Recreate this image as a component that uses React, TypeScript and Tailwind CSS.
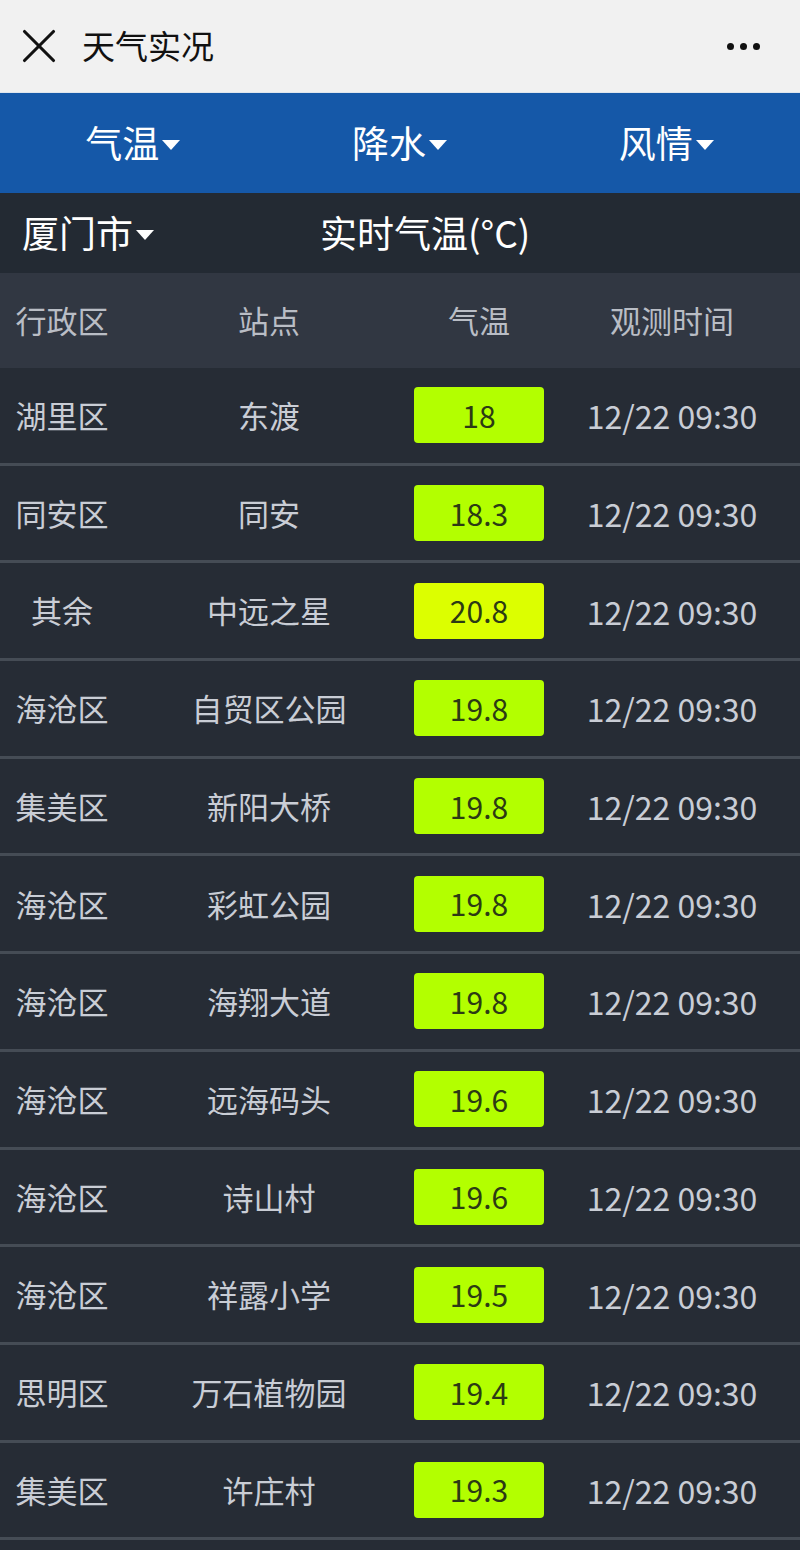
import { X } from "lucide-react";

type Row = {
  district: string;
  station: string;
  temp: string;
  hot?: boolean;
};

const rows: Row[] = [
  { district: "湖里区", station: "东渡", temp: "18" },
  { district: "同安区", station: "同安", temp: "18.3" },
  { district: "其余", station: "中远之星", temp: "20.8", hot: true },
  { district: "海沧区", station: "自贸区公园", temp: "19.8" },
  { district: "集美区", station: "新阳大桥", temp: "19.8" },
  { district: "海沧区", station: "彩虹公园", temp: "19.8" },
  { district: "海沧区", station: "海翔大道", temp: "19.8" },
  { district: "海沧区", station: "远海码头", temp: "19.6" },
  { district: "海沧区", station: "诗山村", temp: "19.6" },
  { district: "海沧区", station: "祥露小学", temp: "19.5" },
  { district: "思明区", station: "万石植物园", temp: "19.4" },
  { district: "集美区", station: "许庄村", temp: "19.3" },
];

function Caret() {
  return (
    <svg width="20" height="12" viewBox="0 0 20 12" className="ml-0.5 mt-1 shrink-0">
      <path d="M1 1 L19 1 L10 11 Z" fill="white" />
    </svg>
  );
}

const cols = "grid grid-cols-[124px_290px_130px_256px] items-center";

export default function App() {
  return (
    <div
      className="w-[800px] h-[1550px] overflow-hidden bg-[#262c35]"
      style={{ fontFamily: '"Noto Sans CJK SC", "Noto Sans", sans-serif' }}
    >
      {/* title bar */}
      <div className="flex h-[93px] items-center border-b-[1px] border-[#dfe6ee] bg-[#f1f1f1] pl-[10px] pr-[40px]">
        <X size={58} strokeWidth={1.3} className="text-[#111]" />
        <div className="ml-[14px] text-[33px] text-[#111]">天气实况</div>
        <div className="ml-auto flex gap-[6px]">
          <span className="h-[7px] w-[7px] rounded-full bg-[#111]" />
          <span className="h-[7px] w-[7px] rounded-full bg-[#111]" />
          <span className="h-[7px] w-[7px] rounded-full bg-[#111]" />
        </div>
      </div>

      {/* element tabs */}
      <div className="grid h-[100px] grid-cols-3 items-center bg-[#1558a8] text-[37px] text-white">
        {["气温", "降水", "风情"].map((t) => (
          <div key={t} className="flex items-center justify-center">
            <span>{t}</span>
            <Caret />
          </div>
        ))}
      </div>

      {/* city + title */}
      <div className="flex h-[80px] items-center bg-[#232a33] pl-[22px] text-white">
        <div className="flex w-[298px] items-center text-[37px]">
          <span>厦门市</span>
          <Caret />
        </div>
        <div className="text-[37px]">实时气温(°C)</div>
      </div>

      {/* column header */}
      <div className={`${cols} h-[95px] bg-[#313742] text-[31px] text-[#b9bdc5]`}>
        <div className="text-center">行政区</div>
        <div className="text-center">站点</div>
        <div className="text-center">气温</div>
        <div className="text-center">观测时间</div>
      </div>

      {rows.map((r, i) => (
        <div
          key={i}
          className={`${cols} h-[97.7px] border-b-[3px] border-[#454c55] text-[31px] text-[#c9cdd5]`}
        >
          <div className="text-center">{r.district}</div>
          <div className="text-center">{r.station}</div>
          <div
            className={`flex h-[56px] items-center justify-center rounded-[4px] text-[30px] text-[#2c3a14] ${
              r.hot ? "bg-[#dcff00]" : "bg-[#b3ff00]"
            }`}
          >
            {r.temp}
          </div>
          <div className="text-center text-[32px]">12/22 09:30</div>
        </div>
      ))}
    </div>
  );
}
